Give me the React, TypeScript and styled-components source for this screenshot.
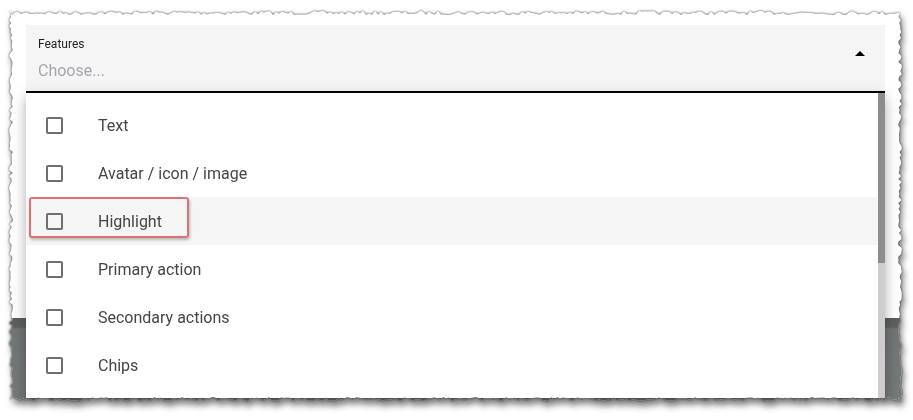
import styled, { createGlobalStyle } from "styled-components";

const GlobalStyle = createGlobalStyle`
  html, body {
    margin: 0;
    padding: 0;
    background: #ffffff;
    font-family: Roboto, "Liberation Sans", Arial, sans-serif;
  }
`;

const SHEET_W = 893;
const SHEET_H = 390;

// torn paper edge, a fixed seed so every render gives the same outline
function tornOutline(): string {
  let seed = 7;
  const rand = () => {
    seed = (seed * 16807) % 2147483647;
    return (seed - 1) / 2147483646;
  };
  const pts: string[] = [];
  const amp = 4;
  const step = 3;
  for (let x = 0; x <= SHEET_W; x += step) pts.push(`${x}px ${(rand() * amp).toFixed(1)}px`);
  for (let y = 0; y <= SHEET_H; y += step) pts.push(`${(SHEET_W - rand() * amp).toFixed(1)}px ${y}px`);
  for (let x = SHEET_W; x >= 0; x -= step) pts.push(`${x}px ${(SHEET_H - rand() * amp).toFixed(1)}px`);
  for (let y = SHEET_H; y >= 0; y -= step) pts.push(`${(rand() * amp).toFixed(1)}px ${y}px`);
  return `polygon(${pts.join(", ")})`;
}

const outline = tornOutline();

const Page = styled.div`
  width: 913px;
  height: 420px;
  padding: 11px 0 0 9px;
  box-sizing: border-box;
`;

const Shadow = styled.div`
  width: ${SHEET_W}px;
  height: ${SHEET_H}px;
  filter: drop-shadow(0 0 0.8px #3a3a3a) drop-shadow(2px 5px 3px rgba(0, 0, 0, 0.5));
`;

const Sheet = styled.div`
  position: relative;
  width: 100%;
  height: 100%;
  display: flex;
  flex-direction: column;
  background: #ffffff;
`;

const Upper = styled.div`
  height: 307px;
  padding: 14px 0 0 17px;
  box-sizing: border-box;
`;

const Backdrop = styled.div`
  flex: 1;
  background: linear-gradient(#5c5d5d 0, #5f6060 9px, #727676 11px, #757979 100%);
`;

const Field = styled.div`
  width: 859px;
  height: 68px;
  background: #f5f5f5;
  border-bottom: 2px solid #000000;
  box-sizing: border-box;
  display: flex;
  align-items: flex-start;
  justify-content: space-between;
  padding: 12px 20px 0 12px;
`;

const FieldText = styled.div`
  display: flex;
  flex-direction: column;
`;

const Label = styled.span`
  font-size: 12px;
  line-height: 14px;
  color: rgba(0, 0, 0, 0.87);
`;

const Placeholder = styled.span`
  margin-top: 10px;
  font-size: 16px;
  line-height: 19px;
  color: #a4a6ad;
`;

const Caret = styled.span`
  margin-top: 14px;
  width: 0;
  height: 0;
  border-left: 5px solid transparent;
  border-right: 5px solid transparent;
  border-bottom: 5px solid #000000;
`;

const Menu = styled.div`
  position: absolute;
  left: 17px;
  top: 82px;
  width: 859px;
  height: 305px;
  background: #ffffff;
  box-shadow: 0 5px 5px -3px rgba(0, 0, 0, 0.2), 0 8px 10px 1px rgba(0, 0, 0, 0.14),
    0 3px 14px 2px rgba(0, 0, 0, 0.12);
  display: flex;
`;

const List = styled.ul`
  flex: 1;
  list-style: none;
  margin: 0;
  padding: 8px 0;
`;

const Item = styled.li<{ $active?: boolean }>`
  position: relative;
  height: 48px;
  display: flex;
  align-items: center;
  padding-left: 20px;
  background: ${(p) => (p.$active ? "#f5f5f5" : "transparent")};
  font-size: 16px;
  color: #454545;
`;

const Box = styled.span`
  width: 17px;
  height: 17px;
  box-sizing: border-box;
  border: 2px solid #6f6f6f;
  border-radius: 2px;
  margin-right: 35px;
`;

const Callout = styled.span`
  position: absolute;
  left: 3px;
  top: 0;
  width: 160px;
  height: 41px;
  box-sizing: border-box;
  border: 2.5px solid #dc7177;
  border-radius: 3px;
  box-shadow: 1px 2px 3px rgba(0, 0, 0, 0.25);
`;

const Track = styled.div`
  width: 7px;
  background: #cdcdcd;
  display: flex;
  flex-direction: column;
`;

const Thumb = styled.div`
  height: 170px;
  background: #8d8d8d;
`;

const items = [
  "Text",
  "Avatar / icon / image",
  "Highlight",
  "Primary action",
  "Secondary actions",
  "Chips",
];

export default function App() {
  return (
    <>
      <GlobalStyle />
      <Page>
        <Shadow>
          <Sheet style={{ clipPath: outline }}>
            <Upper>
              <Field>
                <FieldText>
                  <Label>Features</Label>
                  <Placeholder>Choose...</Placeholder>
                </FieldText>
                <Caret />
              </Field>
            </Upper>
            <Backdrop />
            <Menu>
              <List>
                {items.map((label) => (
                  <Item key={label} $active={label === "Highlight"}>
                    {label === "Highlight" && <Callout />}
                    <Box />
                    {label}
                  </Item>
                ))}
              </List>
              <Track>
                <Thumb />
              </Track>
            </Menu>
          </Sheet>
        </Shadow>
      </Page>
    </>
  );
}
